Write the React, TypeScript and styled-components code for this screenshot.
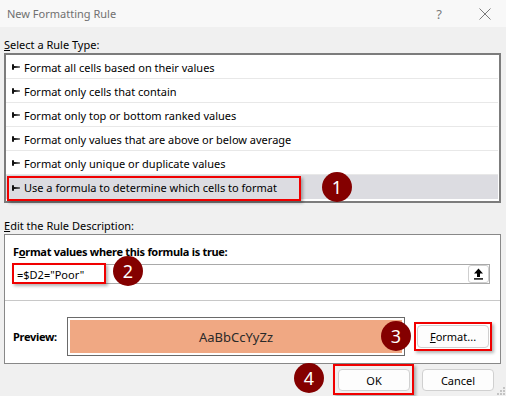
import { createGlobalStyle } from 'styled-components';
import styled from 'styled-components';

const GlobalStyle = createGlobalStyle`
  html, body {
    margin: 0;
    padding: 0;
    background: #f0f0f0;
  }
  * {
    box-sizing: border-box;
  }
`;

const RULE_TYPES = [
  'Format all cells based on their values',
  'Format only cells that contain',
  'Format only top or bottom ranked values',
  'Format only values that are above or below average',
  'Format only unique or duplicate values',
  'Use a formula to determine which cells to format',
];

const Bullet = () => (
  <svg width="8" height="6" viewBox="0 0 8 6">
    <path d="M0 0.3 H2 V2 L8 2.4 V3.6 L2 4 V5.7 H0 Z" fill="#111" />
  </svg>
);

const UploadIcon = () => (
  <svg width="11" height="12" viewBox="0 0 11 12">
    <path d="M5.5 0.5 L10 5.5 H7 V9 H4 V5.5 H1 Z" fill="#000" />
    <rect x="1" y="10.2" width="9" height="1.4" fill="#000" />
  </svg>
);

const CloseIcon = () => (
  <svg width="12" height="12" viewBox="0 0 12 12">
    <path d="M0.5 0.5 L11.5 11.5 M11.5 0.5 L0.5 11.5" stroke="#7a7a7a" strokeWidth="1" />
  </svg>
);

const Grip = () => (
  <svg width="8" height="8" viewBox="0 0 8 8">
    {[
      [6, 0],
      [6, 3],
      [3, 3],
      [6, 6],
      [3, 6],
      [0, 6],
    ].map(([x, y], i) => (
      <rect key={i} x={x} y={y} width="2" height="2" fill="#c4c4c4" />
    ))}
  </svg>
);

export default function App() {
  return (
    <>
      <GlobalStyle />
      <Dialog>
        <TitleBar>
          <Title>New Formatting Rule</Title>
          <TitleButton $width={50}>?</TitleButton>
          <TitleButton $width={42}>
            <CloseIcon />
          </TitleButton>
        </TitleBar>

        <Body>
          <SectionLabel $top={10}>
            <u>S</u>elect a Rule Type:
          </SectionLabel>
          <RuleList>
            {RULE_TYPES.map((item, i) => (
              <RuleRow key={i} $selected={i === RULE_TYPES.length - 1}>
                <Bullet />
                <span>{item}</span>
              </RuleRow>
            ))}
          </RuleList>

          <SectionLabel $top={15}>
            <u>E</u>dit the Rule Description:
          </SectionLabel>
          <DescBox>
            <BoldLabel>
              F<u>o</u>rmat values where this formula is true:
            </BoldLabel>
            <FormulaInput>
              <span>=$D2="Poor"</span>
              <IconButton>
                <UploadIcon />
              </IconButton>
            </FormulaInput>
            <Divider />
            <PreviewRow>
              <PreviewLabel>Preview:</PreviewLabel>
              <PreviewBox>
                <PreviewFill>AaBbCcYyZz</PreviewFill>
              </PreviewBox>
              <DialogButton $width={72} $height={23}>
                <u>F</u>ormat...
              </DialogButton>
            </PreviewRow>
          </DescBox>

          <Footer>
            <DialogButton $width={72} $height={22}>
              OK
            </DialogButton>
            <DialogButton $width={72} $height={22}>
              Cancel
            </DialogButton>
          </Footer>
        </Body>

        <GripCorner>
          <Grip />
        </GripCorner>

        <Highlight $x={7} $y={176} $w={294} $h={25} />
        <Marker $x={322} $y={172}>1</Marker>
        <Highlight $x={12} $y={263} $w={94} $h={21} />
        <Marker $x={113} $y={256}>2</Marker>
        <Highlight $x={414} $y={322} $w={78} $h={29} />
        <Marker $x={381} $y={321}>3</Marker>
        <Highlight $x={333} $y={364} $w={81} $h={31} />
        <Marker $x={294} $y={363}>4</Marker>
      </Dialog>
    </>
  );
}

const Dialog = styled.div`
  position: relative;
  width: 506px;
  height: 396px;
  overflow: hidden;
  background: #f0f0f0;
  font-family: 'Segoe UI', 'Noto Sans', 'Liberation Sans', sans-serif;
  font-size: 11px;
  color: #000;
`;

const TitleBar = styled.div`
  height: 27px;
  display: flex;
  align-items: center;
  padding-left: 7px;
  background: #f8f8f8;
  color: #707070;
`;

const Title = styled.div`
  flex: 1;
`;

const TitleButton = styled.div<{ $width: number }>`
  width: ${(p) => p.$width}px;
  height: 27px;
  display: flex;
  align-items: center;
  justify-content: center;
  font-size: 13px;
  color: #7a7a7a;
`;

const Body = styled.div`
  padding: 0 5px 0 4px;
`;

const SectionLabel = styled.div<{ $top: number }>`
  margin-top: ${(p) => p.$top}px;
  margin-bottom: 2px;
  height: 14px;
  line-height: 15px;
  u {
    text-decoration-thickness: 1px;
    text-underline-offset: 1px;
  }
`;

const RuleList = styled.div`
  height: 150px;
  border: 2px solid #7c7c7c;
  background: #fff;
  padding-right: 1px;
`;

const RuleRow = styled.div<{ $selected: boolean }>`
  height: 24px;
  display: flex;
  align-items: center;
  gap: 4px;
  padding: 1px 0 0 6px;
  background: ${(p) => (p.$selected ? '#dcdce1' : '#fff')};
  border-bottom: ${(p) => (p.$selected ? 'none' : '1px solid #e8e8e8')};
  svg {
    flex-shrink: 0;
  }
`;

const DescBox = styled.div`
  height: 130px;
  border: 1px solid #888;
  background: #fff;
  margin-top: 1px;
`;

const BoldLabel = styled.div`
  margin: 9px 0 0 8px;
  height: 14px;
  line-height: 15px;
  font-weight: 700;
  letter-spacing: -0.3px;
`;

const FormulaInput = styled.div`
  margin: 6px 10px 0 7px;
  height: 20px;
  border: 1px solid #a9a9a9;
  display: flex;
  align-items: center;
  justify-content: space-between;
  padding: 0 0 0 4px;
`;

const IconButton = styled.div`
  width: 21px;
  height: 18px;
  border: 1px solid #cfcfcf;
  border-radius: 3px;
  background: #fff;
  display: flex;
  align-items: center;
  justify-content: center;
`;

const Divider = styled.div`
  margin-top: 16px;
  height: 1px;
  background: #c8c8c8;
`;

const PreviewRow = styled.div`
  margin-top: 16px;
  display: flex;
  align-items: center;
  padding-left: 8px;
`;

const PreviewLabel = styled.div`
  width: 54px;
  font-weight: 700;
  letter-spacing: -0.3px;
`;

const PreviewBox = styled.div`
  width: 338px;
  height: 39px;
  border: 1px solid #6a6a6a;
  padding: 2px;
  background: #fff;
  margin-right: 12px;
`;

const PreviewFill = styled.div`
  height: 100%;
  background: #f0a883;
  display: flex;
  align-items: center;
  justify-content: center;
  font-size: 13px;
  color: #2a2a2a;
`;

const DialogButton = styled.div<{ $width: number; $height: number }>`
  width: ${(p) => p.$width}px;
  height: ${(p) => p.$height}px;
  display: flex;
  align-items: center;
  justify-content: center;
  background: #fdfdfd;
  border: 1px solid #d0d0d0;
  border-radius: 4px;
`;

const Footer = styled.div`
  margin-top: 5px;
  display: flex;
  justify-content: flex-end;
  gap: 12px;
  padding-right: 7px;
`;

const GripCorner = styled.div`
  position: absolute;
  right: 1px;
  bottom: 1px;
  display: flex;
`;

const Highlight = styled.div<{ $x: number; $y: number; $w: number; $h: number }>`
  position: absolute;
  left: ${(p) => p.$x}px;
  top: ${(p) => p.$y}px;
  width: ${(p) => p.$w}px;
  height: ${(p) => p.$h}px;
  border: 2px solid #f00000;
  box-shadow: 2px 2px 3px rgba(0, 0, 0, 0.3);
  pointer-events: none;
`;

const Marker = styled.div<{ $x: number; $y: number }>`
  position: absolute;
  left: ${(p) => p.$x}px;
  top: ${(p) => p.$y}px;
  width: 30px;
  height: 30px;
  border-radius: 50%;
  background: #840000;
  color: #fff;
  display: flex;
  align-items: center;
  justify-content: center;
  font-size: 18px;
  line-height: 1;
`;
